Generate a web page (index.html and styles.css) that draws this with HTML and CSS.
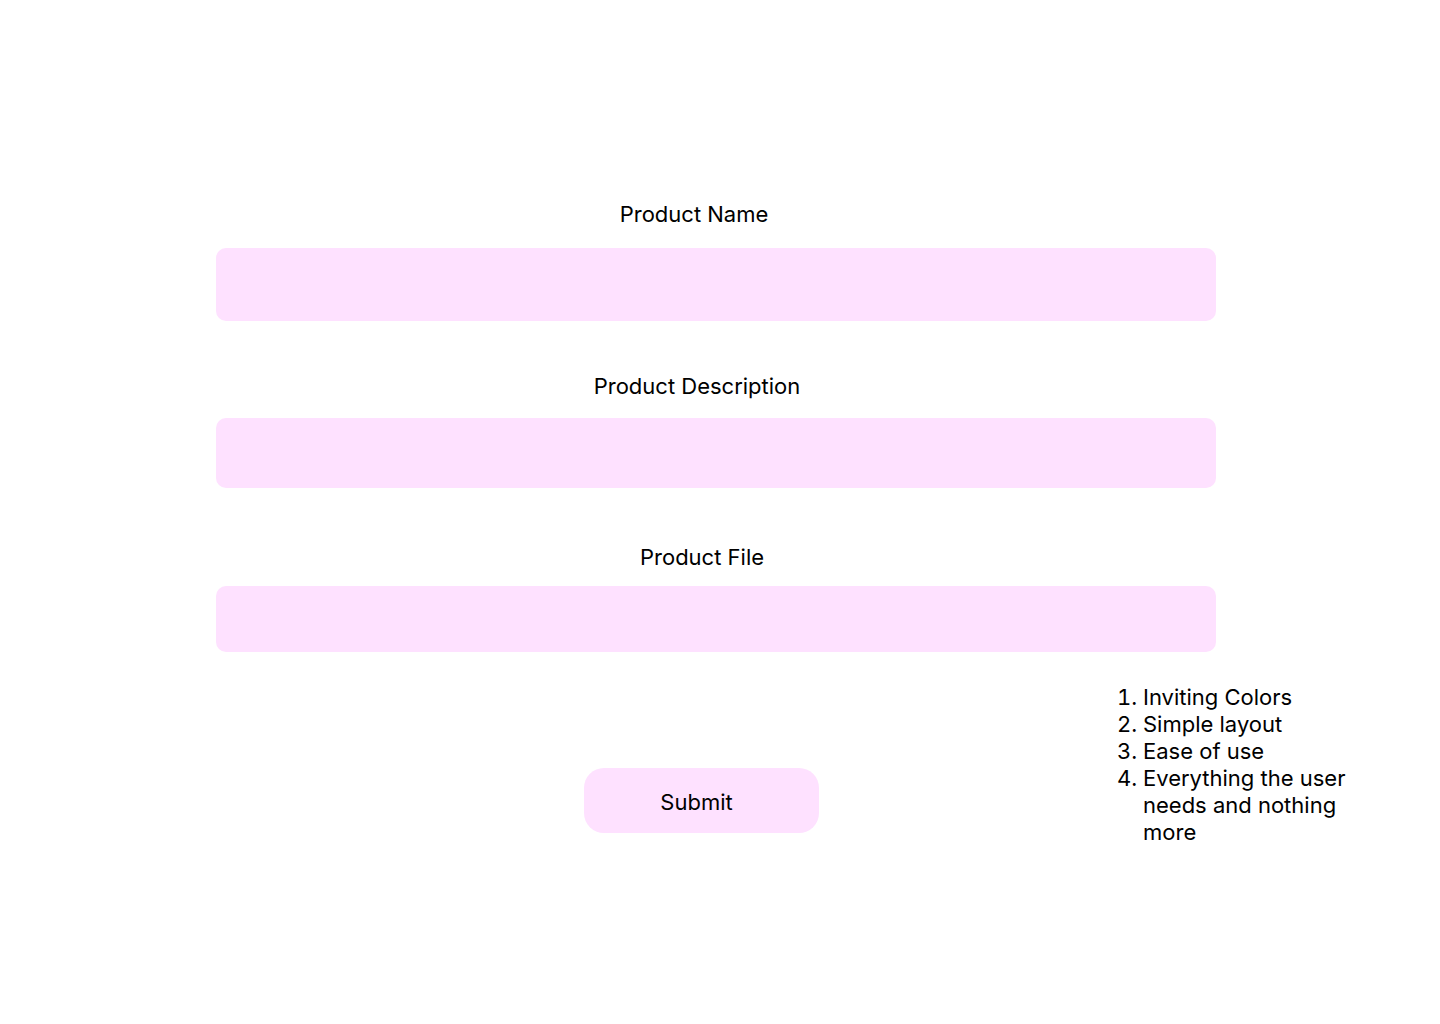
FILE: index.html
```html
<!DOCTYPE html>
<html lang="en">
<head>
  <meta charset="utf-8">
  <meta name="viewport" content="width=device-width, initial-scale=1">
  <title>Product Submission</title>
  <link rel="stylesheet" href="styles.css">
</head>
<body>
  <main class="page">
    <form class="form">
      <div class="field field-name">
        <label class="label" for="name">Product Name</label>
        <input class="input" id="name" name="name" type="text">
      </div>
      <div class="field field-description">
        <label class="label" for="description">Product Description</label>
        <input class="input" id="description" name="description" type="text">
      </div>
      <div class="field field-file">
        <label class="label" for="file">Product File</label>
        <input class="input input-file" id="file" name="file" type="file">
      </div>
      <div class="footer">
        <button class="submit" type="submit">Submit</button>
        <ol class="notes">
          <li>Inviting Colors</li>
          <li>Simple layout</li>
          <li>Ease of use</li>
          <li>Everything the user needs and nothing more</li>
        </ol>
      </div>
    </form>
  </main>
</body>
</html>
```
FILE: styles.css
```css
* {
  box-sizing: border-box;
}

body {
  margin: 0;
  background: #ffffff;
  color: #000000;
  font-family: "Inter", sans-serif;
  font-size: 22px;
  line-height: 27px;
}

.page {
  padding: 201px 0 80px;
}

.form {
  display: flex;
  flex-direction: column;
}

.field {
  display: flex;
  flex-direction: column;
  width: 100%;
  max-width: 1440px;
  margin: 0 auto;
  padding: 0 224px 0 216px;
}

.label {
  text-align: center;
}

.input {
  width: 100%;
  padding: 0 24px;
  border: 0;
  border-radius: 10px;
  background: #fee1ff;
  color: inherit;
  font: inherit;
}

.field-name {
  gap: 20px;
  margin-bottom: 52px;
}

.field-name .label {
  padding-right: 44px;
}

.field-name .input {
  height: 73px;
}

.field-description {
  gap: 18px;
  margin-bottom: 56px;
}

.field-description .label {
  padding-right: 38px;
}

.field-description .input {
  height: 70px;
}

.field-file {
  gap: 15px;
  margin-bottom: 32px;
}

.field-file .label {
  padding-right: 28px;
}

.field-file .input {
  height: 66px;
}

/* The whole bar is the click target, so the native button is hidden. */
.input-file {
  color: transparent;
  cursor: pointer;
}

.input-file::file-selector-button {
  display: none;
}

.footer {
  display: flex;
  justify-content: flex-end;
  align-items: flex-start;
  gap: 297px;
  width: 100%;
  max-width: 1440px;
  margin: 0 auto;
  padding-right: 80px;
}

.submit {
  width: 235px;
  height: 65px;
  margin-top: 84px;
  padding: 3px 10px 0 0;
  border: 0;
  border-radius: 20px;
  background: #fee1ff;
  color: inherit;
  font: inherit;
  cursor: pointer;
}

.notes {
  width: 244px;
  margin: 0;
  padding-left: 27px;
}

@media (max-width: 1100px) {
  .field {
    padding: 0 40px;
  }

  .footer {
    justify-content: space-between;
    gap: 40px;
    padding: 0 40px;
  }
}
```
